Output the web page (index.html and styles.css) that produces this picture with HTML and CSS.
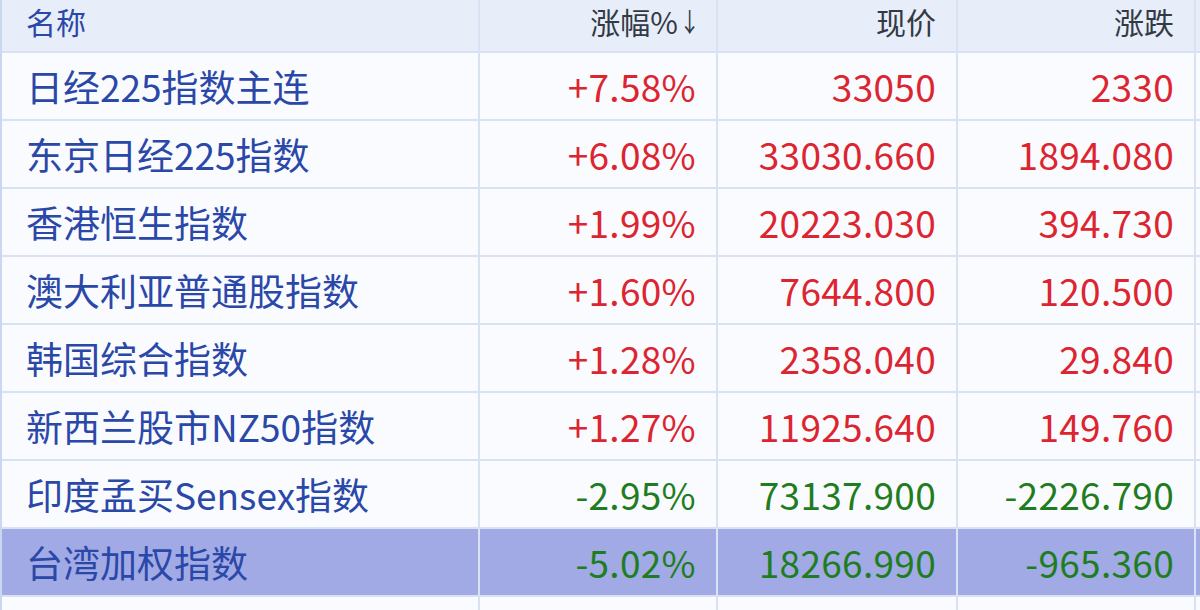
FILE: index.html
```html
<!DOCTYPE html>
<html lang="zh-CN">
<head>
<meta charset="utf-8">
<link rel="stylesheet" href="styles.css">
</head>
<body>
<div class="table">
  <div class="row head">
    <div class="cell name">名称</div>
    <div class="cell num sort">涨幅%<span class="arrow">↓</span></div>
    <div class="cell num">现价</div>
    <div class="cell num">涨跌</div>
    <div class="cell extra"></div>
  </div>
  <div class="row">
    <div class="cell name">日经225指数主连</div>
    <div class="cell num up">+7.58%</div>
    <div class="cell num up">33050</div>
    <div class="cell num up">2330</div>
    <div class="cell extra"></div>
  </div>
  <div class="row">
    <div class="cell name">东京日经225指数</div>
    <div class="cell num up">+6.08%</div>
    <div class="cell num up">33030.660</div>
    <div class="cell num up">1894.080</div>
    <div class="cell extra"></div>
  </div>
  <div class="row">
    <div class="cell name">香港恒生指数</div>
    <div class="cell num up">+1.99%</div>
    <div class="cell num up">20223.030</div>
    <div class="cell num up">394.730</div>
    <div class="cell extra"></div>
  </div>
  <div class="row">
    <div class="cell name">澳大利亚普通股指数</div>
    <div class="cell num up">+1.60%</div>
    <div class="cell num up">7644.800</div>
    <div class="cell num up">120.500</div>
    <div class="cell extra"></div>
  </div>
  <div class="row">
    <div class="cell name">韩国综合指数</div>
    <div class="cell num up">+1.28%</div>
    <div class="cell num up">2358.040</div>
    <div class="cell num up">29.840</div>
    <div class="cell extra"></div>
  </div>
  <div class="row">
    <div class="cell name">新西兰股市NZ50指数</div>
    <div class="cell num up">+1.27%</div>
    <div class="cell num up">11925.640</div>
    <div class="cell num up">149.760</div>
    <div class="cell extra"></div>
  </div>
  <div class="row">
    <div class="cell name">印度孟买Sensex指数</div>
    <div class="cell num down">-2.95%</div>
    <div class="cell num down">73137.900</div>
    <div class="cell num down">-2226.790</div>
    <div class="cell extra"></div>
  </div>
  <div class="row selected">
    <div class="cell name">台湾加权指数</div>
    <div class="cell num down">-5.02%</div>
    <div class="cell num down">18266.990</div>
    <div class="cell num down">-965.360</div>
    <div class="cell extra"></div>
  </div>
  <div class="row tail">
    <div class="cell name"></div>
    <div class="cell num"></div>
    <div class="cell num"></div>
    <div class="cell num"></div>
    <div class="cell extra"></div>
  </div>
</div>
</body>
</html>
```

FILE: styles.css
```css
html, body {
  margin: 0;
  padding: 0;
  background: #fafbfe;
  overflow: hidden;
}
body {
  width: 1200px;
  height: 610px;
  font-family: "Noto Sans CJK SC", "Noto Sans", sans-serif;
}
.table {
  border-left: 2px solid #c9d7f0;
  width: 1198px;
}
.row {
  display: grid;
  grid-template-columns: 478px 238px 240px 238px 4px;
  height: 68px;
  background: #fafbfe;
}
.row.head {
  height: 53px;
  background: #e7eef9;
}
.row.selected {
  background: #a1aae5;
}
.row.tail {
  height: 13px;
}
.cell {
  box-sizing: border-box;
  border-right: 2px solid #d8e2f2;
  border-bottom: 2px solid #d8e2f2;
  display: flex;
  align-items: center;
  font-size: 37px;
  white-space: nowrap;
  overflow: hidden;
}
.head .cell {
  font-size: 30px;
  line-height: 36px;
  color: #333a44;
  align-items: flex-start;
  padding-top: 3px;
  overflow: visible;
}
.head .cell.sort {
  padding-right: 26px;
}
.head .arrow {
  display: inline-block;
  width: 12px;
  font-size: 26px;
  text-align: right;
  transform: scaleX(0.8);
}
.tail .cell {
  border-bottom: none;
}
.cell.name {
  padding-left: 24px;
  color: #2a48a8;
}
.cell.num {
  justify-content: flex-end;
  padding-right: 20px;
  letter-spacing: 0.3px;
}
.head .cell.num {
  letter-spacing: 0;
}
.cell.extra {
  border-right: none;
}
.up { color: #dc2530; }
.down { color: #1f7d1f; }
```
